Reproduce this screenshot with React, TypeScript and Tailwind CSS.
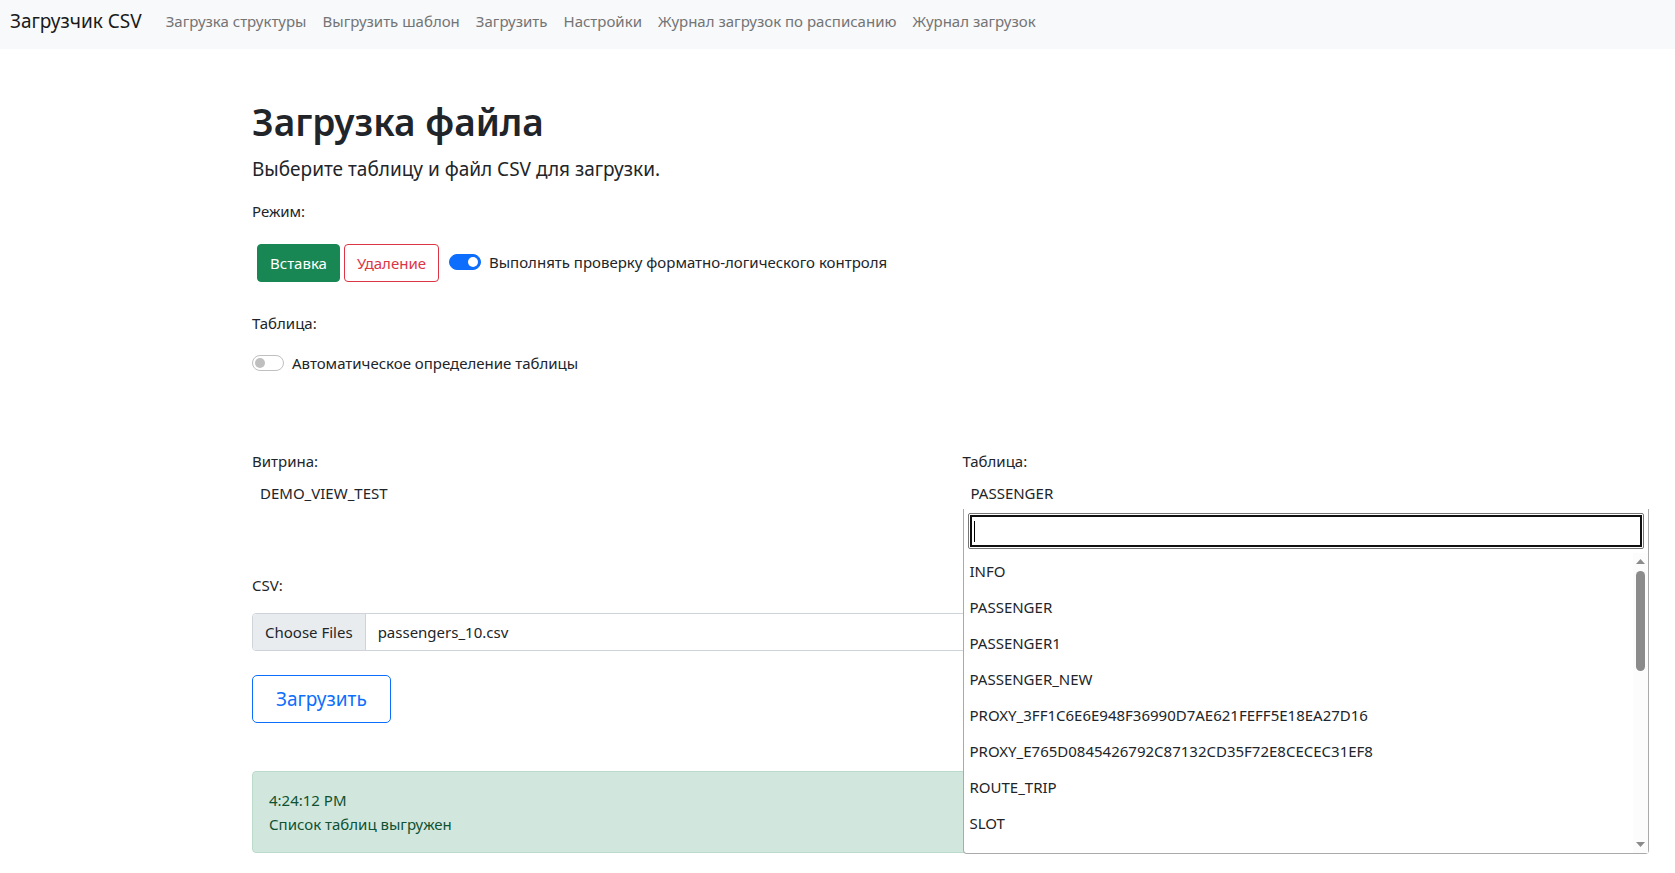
import React, { useState } from 'react';

const navLinks = [
  'Загрузка структуры',
  'Выгрузить шаблон',
  'Загрузить',
  'Настройки',
  'Журнал загрузок по расписанию',
  'Журнал загрузок',
];

const tables = [
  'INFO',
  'PASSENGER',
  'PASSENGER1',
  'PASSENGER_NEW',
  'PROXY_3FF1C6E6E948F36990D7AE621FEFF5E18EA27D16',
  'PROXY_E765D0845426792C87132CD35F72E8CECEC31EF8',
  'ROUTE_TRIP',
  'SLOT',
];

interface SwitchProps {
  id: string;
  label: string;
  checked: boolean;
  onChange: (value: boolean) => void;
}

const Switch: React.FC<SwitchProps> = ({ id, label, checked, onChange }) => (
  <div className="flex items-center gap-2">
    <span className="relative flex h-4 w-8">
      <input
        id={id}
        type="checkbox"
        role="switch"
        checked={checked}
        onChange={(e) => onChange(e.target.checked)}
        className="peer h-4 w-8 appearance-none rounded-full border border-[#bfbfbf] bg-white checked:border-[#0d6efd] checked:bg-[#0d6efd]"
      />
      <span className="pointer-events-none absolute left-[3px] top-[3px] h-2.5 w-2.5 rounded-full bg-[#bfbfbf] peer-checked:left-[19px] peer-checked:bg-white" />
    </span>
    <label htmlFor={id}>{label}</label>
  </div>
);

const TableDropdown: React.FC = () => {
  const [search, setSearch] = useState('');

  return (
    <div className="absolute inset-x-0 top-full z-10 rounded-b border border-t-0 border-[#aaa] bg-white">
      <div className="relative p-1">
        <input
          type="search"
          aria-label="Поиск таблицы"
          value={search}
          onChange={(e) => setSearch(e.target.value)}
          className="block h-9 w-full rounded-xs border border-[#767676] bg-white px-1 outline-2 -outline-offset-4 outline-[#101010]"
        />
        {search === '' && <span className="absolute left-2.5 top-3 h-[21px] w-px bg-black" />}
      </div>
      <div className="flex h-[300px]">
        <ul role="listbox" aria-label="Таблица" className="min-w-0 flex-1 overflow-hidden">
          {tables
            .filter((name) => name.includes(search.toUpperCase()))
            .map((name) => (
              <li key={name} role="option" aria-selected={false} className="p-1.5">
                {name}
              </li>
            ))}
        </ul>
        <div className="flex w-[15px] flex-col items-center bg-[#fcfcfc] py-1.5">
          <svg width="9" height="5" viewBox="0 0 9 5" fill="#8b8b8b">
            <path d="M4.5 0 9 5H0z" />
          </svg>
          <div className="mt-[7px] h-[100px] w-[9px] rounded-full bg-[#8b8b8b]" />
          <svg className="mt-auto" width="9" height="5" viewBox="0 0 9 5" fill="#8b8b8b">
            <path d="M0 0h9L4.5 5z" />
          </svg>
        </div>
      </div>
    </div>
  );
};

const App: React.FC = () => {
  const [checkFormat, setCheckFormat] = useState(true);
  const [autoDetect, setAutoDetect] = useState(false);

  return (
    <div className="min-h-screen bg-white font-['Noto_Sans','Open_Sans',sans-serif] text-[15px] leading-6 text-[#212529]">
      <nav className="flex h-[49px] items-start bg-[#f8f9fa] px-2.5 pt-[9px]">
        <a href="#" className="mr-6 text-[19px] text-[#1a1a1a]">
          Загрузчик CSV
        </a>
        <div className="flex gap-4">
          {navLinks.map((link) => (
            <a key={link} href="#" className="text-[#737475]">
              {link}
            </a>
          ))}
        </div>
      </nav>

      <main className="pb-5 pl-[252px] pr-[26px] pt-[49px]">
        <h1 className="text-[37px] font-semibold leading-12">Загрузка файла</h1>
        <p className="mt-2 text-[19px] leading-[30px]">Выберите таблицу и файл CSV для загрузки.</p>

        <p className="mt-[15px]">Режим:</p>
        <div className="mt-[21px] flex items-center pl-[5px]">
          <button type="button" className="h-[38px] rounded border border-[#198754] bg-[#198754] px-3 text-white">
            Вставка
          </button>
          <button type="button" className="ml-1 mr-2.5 h-[38px] rounded border border-[#dc3545] px-3 text-[#dc3545]">
            Удаление
          </button>
          <div className="pb-0.5">
            <Switch
              id="check-format"
              label="Выполнять проверку форматно-логического контроля"
              checked={checkFormat}
              onChange={setCheckFormat}
            />
          </div>
        </div>

        <p className="mt-[29px]">Таблица:</p>
        <div className="mt-4">
          <Switch
            id="auto-detect"
            label="Автоматическое определение таблицы"
            checked={autoDetect}
            onChange={setAutoDetect}
          />
        </div>

        <div className="mt-[74px] grid grid-cols-2 gap-6">
          <div>
            <label htmlFor="view" className="block">
              Витрина:
            </label>
            <select id="view" className="mt-1 block h-[31px] w-full appearance-none bg-white px-2">
              <option>DEMO_VIEW_TEST</option>
            </select>
          </div>
          <div className="relative pb-px">
            <label htmlFor="table" className="block">
              Таблица:
            </label>
            <select id="table" defaultValue="PASSENGER" className="mt-1 block h-[31px] w-full appearance-none bg-white px-2">
              {tables.map((name) => (
                <option key={name}>{name}</option>
              ))}
            </select>
            <TableDropdown />
          </div>
        </div>

        <p className="mt-16">CSV:</p>
        <label className="relative mt-4 flex h-[38px] items-stretch overflow-hidden rounded border border-[#ced4da]">
          <input type="file" multiple className="sr-only" />
          <span className="flex items-center border-r border-[#ced4da] bg-[#e9ecef] px-3">Choose Files</span>
          <span className="flex items-center px-3">passengers_10.csv</span>
        </label>

        <button
          type="button"
          className="mt-6 block h-12 rounded-[5px] border border-[#0d6efd] px-[23px] text-[19px] text-[#0d6efd]"
        >
          Загрузить
        </button>

        <div role="alert" className="mt-12 rounded border border-[#badbcc] bg-[#d1e7dd] p-4 text-[#0f5132]">
          <p>4:24:12 PM</p>
          <p>Список таблиц выгружен</p>
        </div>
      </main>
    </div>
  );
};

export default App;
